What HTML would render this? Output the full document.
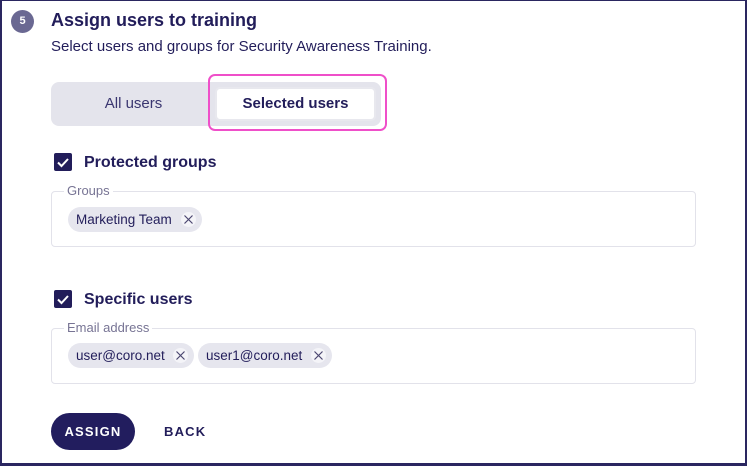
<!DOCTYPE html>
<html><head><meta charset="utf-8"><style>
*{box-sizing:border-box;margin:0;padding:0}
body{width:747px;height:466px;background:#fff;font-family:"Liberation Sans",sans-serif;color:#221d5a;position:relative;overflow:hidden}
.frame{position:absolute;left:0;top:0;width:747px;height:466px;border:2px solid #2a2660;border-top:1px solid #2a2660;border-bottom:3px solid #2a2660}
.abs{position:absolute}
.circ{left:11px;top:10px;width:23px;height:23px;border-radius:50%;background:#6a6892;color:#fff;font-size:11px;font-weight:bold;text-align:center;line-height:23px}
.title{left:51px;top:10px;font-size:18px;font-weight:bold;color:#221d5a}
.sub{left:51px;top:38px;font-size:15px;color:#221d5a}
.tog{left:51px;top:82px;width:330px;height:44px;background:#e4e4ec;border-radius:8px}
.all{left:51px;top:82px;width:165px;height:44px;line-height:44px;text-align:center;font-size:15px;color:#3a3670}
.sel{left:215px;top:87px;width:161px;height:34px;background:#fff;border-radius:5px;border:2px solid #e8e8ee;line-height:30px;text-align:center;font-size:15px;font-weight:bold;color:#221d5a}
.pink{left:208px;top:74px;width:179px;height:57px;border:2px solid #ef4fc9;border-radius:7px}
.cb{width:18px;height:18px;background:#221d5a;border-radius:2px}
.lbl{font-size:16px;font-weight:bold;color:#221d5a}
.fs{left:51px;width:645px;height:56px;border:1px solid #e2e2ea;border-radius:4px}
.leg{font-size:13px;color:#777494;background:#fff;padding:0 3px}
.chip{height:25px;border-radius:13px;background:#e6e6ee;font-size:13.5px;color:#221d5a;line-height:25px;padding-left:8px}
.chip svg{position:absolute;right:6px;top:5px}
.btn{left:51px;top:413px;width:84px;height:37px;background:#221d5e;border-radius:19px;color:#fff;font-size:13px;font-weight:bold;letter-spacing:1.2px;text-align:center;line-height:37px}
.back{left:164px;top:413px;line-height:37px;font-size:13px;font-weight:bold;letter-spacing:1.2px;color:#221d5a}
</style></head><body>
<div class="frame"></div>
<div class="abs circ">5</div>
<div class="abs title">Assign users to training</div>
<div class="abs sub">Select users and groups for Security Awareness Training.</div>
<div class="abs tog"></div>
<div class="abs all">All users</div>
<div class="abs sel">Selected users</div>
<div class="abs pink"></div>

<div class="abs cb" style="left:54px;top:153px"><svg width="18" height="18"><path d="M4 9.5l3.5 3.5 6.5-7" stroke="#fff" stroke-width="2" fill="none"/></svg></div>
<div class="abs lbl" style="left:84px;top:154px">Protected groups</div>
<div class="abs fs" style="top:191px"></div>
<div class="abs leg" style="left:64px;top:183px">Groups</div>
<div class="abs chip" style="left:68px;top:207px;width:134px">Marketing Team<svg width="15" height="15"><circle cx="7.5" cy="7.5" r="7.5" fill="#f4f4f8"/><path d="M3.5 3.5l8 8M11.5 3.5l-8 8" stroke="#4a4670" stroke-width="1.2"/></svg></div>

<div class="abs cb" style="left:54px;top:290px"><svg width="18" height="18"><path d="M4 9.5l3.5 3.5 6.5-7" stroke="#fff" stroke-width="2" fill="none"/></svg></div>
<div class="abs lbl" style="left:84px;top:291px">Specific users</div>
<div class="abs fs" style="top:328px"></div>
<div class="abs leg" style="left:64px;top:320px">Email address</div>
<div class="abs chip" style="left:68px;top:343px;width:126px">user@coro.net<svg width="15" height="15"><circle cx="7.5" cy="7.5" r="7.5" fill="#f4f4f8"/><path d="M3.5 3.5l8 8M11.5 3.5l-8 8" stroke="#4a4670" stroke-width="1.2"/></svg></div>
<div class="abs chip" style="left:198px;top:343px;width:134px">user1@coro.net<svg width="15" height="15"><circle cx="7.5" cy="7.5" r="7.5" fill="#f4f4f8"/><path d="M3.5 3.5l8 8M11.5 3.5l-8 8" stroke="#4a4670" stroke-width="1.2"/></svg></div>

<div class="abs btn">ASSIGN</div>
<div class="abs back">BACK</div>
</body></html>
